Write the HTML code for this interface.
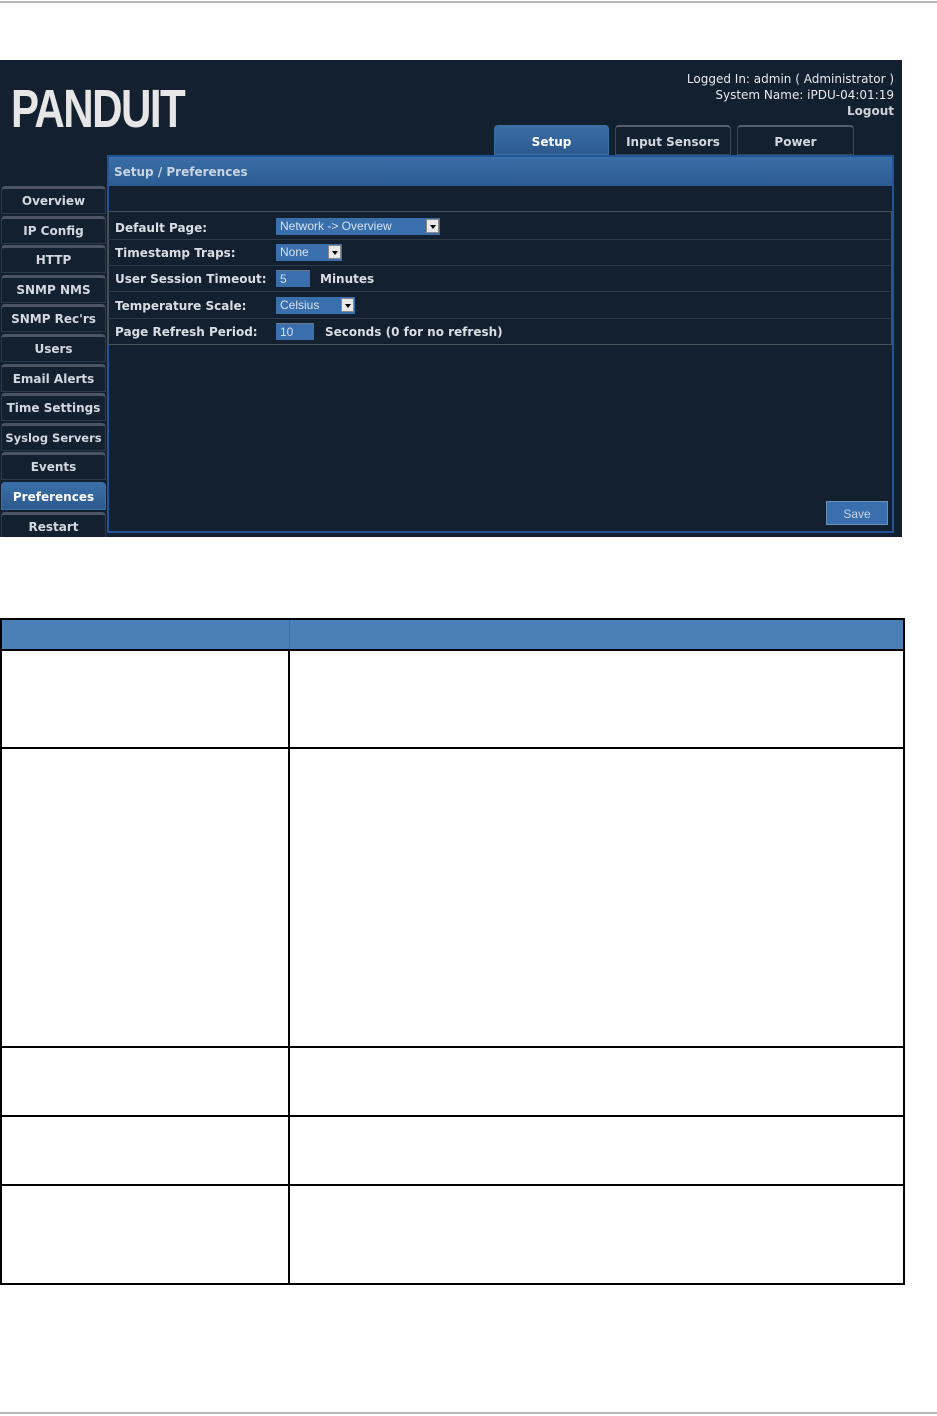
<!DOCTYPE html>
<html><head><style>
*{margin:0;padding:0;box-sizing:border-box}
body{width:937px;height:1416px;background:#fff;position:relative;font-family:"DejaVu Sans","Liberation Sans",sans-serif;overflow:hidden}
.a{position:absolute}
#shot{left:0;top:60px;width:902px;height:477px;background:#132030;color:#cfd6df;overflow:hidden}
.nav{left:1px;width:105px;height:28px;border:1px solid #2b3a4c;border-top:3px solid #4b5563;border-radius:4px 4px 0 0;background:#132030;font-size:12px;font-weight:bold;text-align:center;line-height:25px;color:#d2d8df}
.tab{top:65px;height:30px;border:1px solid #3a4a5c;border-top:2px solid #56606c;border-radius:4px 4px 0 0;font-size:12px;font-weight:bold;text-align:center;line-height:31px;color:#d2d8df}
.lbl{left:115px;font-size:12px;font-weight:bold;color:#d9dee4}
.sel{background:#3a6fae;color:#d8e2ee;font-size:12px;font-family:"Liberation Sans",sans-serif;height:17px;line-height:17px;padding-left:4px}
.arr{position:absolute;right:1px;top:1px;width:13px;height:14px;background:#e8e8e8;border:1px solid #888}
.arr:after{content:"";position:absolute;left:3px;top:5px;border:3px solid transparent;border-top:4px solid #000}
.rl{left:108px;width:782px;height:1px;background:#2e3b4a}
</style></head><body>
<div class="a" style="left:0;top:1px;width:937px;height:2px;background:#b8b8b8"></div>
<div class="a" id="shot">
 <div class="a" style="left:11px;top:22px;font-family:'Liberation Sans',sans-serif;font-weight:bold;font-size:54px;color:#e6e6e6;letter-spacing:-2px;transform:scaleX(0.78);transform-origin:left;line-height:54px">PANDUIT</div>
 <div class="a" style="right:8px;top:11px;text-align:right;font-size:12px;line-height:16px;color:#e6eaee">Logged In: admin ( Administrator )<br>System Name: iPDU-04:01:19<br><b style="color:#cfd4da">Logout</b></div>
 <div class="a tab" style="left:494px;width:115px;background:linear-gradient(#3a6ea6,#2c5a8f);border-color:#3a6ea6;color:#fff">Setup</div>
 <div class="a tab" style="left:615px;width:116px">Input Sensors</div>
 <div class="a tab" style="left:737px;width:117px">Power</div>
 <div class="a" style="left:107px;top:95px;width:787px;height:378px;border:2px solid #1f5597"></div>
 <div class="a" style="left:109px;top:97px;width:783px;height:29px;background:linear-gradient(#3a6ea6,#2c5c92);font-size:12px;font-weight:bold;line-height:31px;padding-left:5px;color:#c8d4e2">Setup / Preferences</div>
 <div class="a" style="left:108px;top:151px;width:784px;height:134px;border:1px solid #4a525c"></div>
 <div class="a rl" style="top:179px"></div><div class="a rl" style="top:205px"></div><div class="a rl" style="top:231px"></div><div class="a rl" style="top:258px"></div>
 <div class="a lbl" style="top:161px">Default Page:</div>
 <div class="a lbl" style="top:186px">Timestamp Traps:</div>
 <div class="a lbl" style="top:212px">User Session Timeout:</div>
 <div class="a lbl" style="top:239px">Temperature Scale:</div>
 <div class="a lbl" style="top:265px">Page Refresh Period:</div>
 <div class="a sel" style="left:276px;top:158px;width:164px">Network -&gt; Overview<span class="arr"></span></div>
 <div class="a sel" style="left:276px;top:184px;width:66px">None<span class="arr"></span></div>
 <div class="a sel" style="left:276px;top:210px;width:34px;border-top:1px solid #6a7a8c">5</div>
 <div class="a lbl" style="left:320px;top:212px">Minutes</div>
 <div class="a sel" style="left:276px;top:237px;width:79px">Celsius<span class="arr"></span></div>
 <div class="a sel" style="left:276px;top:263px;width:38px;border-top:1px solid #6a7a8c">10</div>
 <div class="a lbl" style="left:325px;top:265px">Seconds (0 for no refresh)</div>
 <div class="a" style="left:826px;top:441px;width:62px;height:24px;background:#3a6fae;border:1px solid #6d8fb8;color:#c8d4e2;font-size:12px;font-family:'Liberation Sans',sans-serif;text-align:center;line-height:24px">Save</div>
 <div class="a nav" style="top:126px">Overview</div>
 <div class="a nav" style="top:156px">IP Config</div>
 <div class="a nav" style="top:185px">HTTP</div>
 <div class="a nav" style="top:215px">SNMP NMS</div>
 <div class="a nav" style="top:244px">SNMP Rec'rs</div>
 <div class="a nav" style="top:274px">Users</div>
 <div class="a nav" style="top:304px">Email Alerts</div>
 <div class="a nav" style="top:333px">Time Settings</div>
 <div class="a nav" style="top:363px;font-size:11.5px">Syslog Servers</div>
 <div class="a nav" style="top:392px">Events</div>
 <div class="a nav" style="top:422px;background:linear-gradient(#3a6ea6,#2c5a8f);border-color:#3a6ea6;color:#fff">Preferences</div>
 <div class="a nav" style="top:452px">Restart</div>
</div>
<div class="a" style="left:0;top:618px;width:905px;height:667px;border:2px solid #000"></div>
<div class="a" style="left:2px;top:620px;width:901px;height:29px;background:#4a80b5"></div>
<div class="a" style="left:289px;top:620px;width:1px;height:29px;background:#3f6f9e"></div>
<div class="a" style="left:0;top:649px;width:905px;height:2px;background:#000"></div>
<div class="a" style="left:0;top:747px;width:905px;height:2px;background:#000"></div>
<div class="a" style="left:0;top:1046px;width:905px;height:2px;background:#000"></div>
<div class="a" style="left:0;top:1115px;width:905px;height:2px;background:#000"></div>
<div class="a" style="left:0;top:1184px;width:905px;height:2px;background:#000"></div>
<div class="a" style="left:288px;top:649px;width:2px;height:636px;background:#000"></div>
<div class="a" style="left:0;top:1412px;width:937px;height:2px;background:#b8b8b8"></div>
</body></html>
